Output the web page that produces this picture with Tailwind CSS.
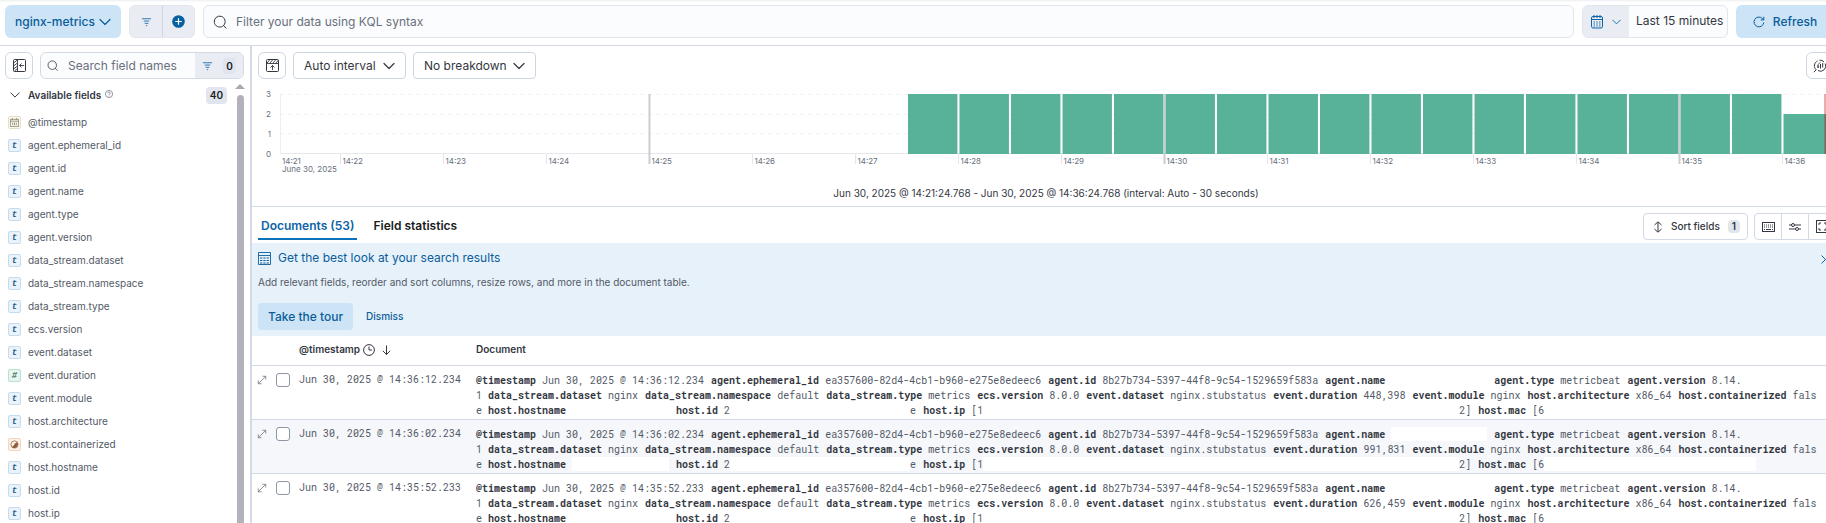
<!DOCTYPE html>
<html lang="en">
<head>
<meta charset="utf-8">
<title>Discover - nginx-metrics</title>
<script src="https://cdn.jsdelivr.net/npm/@tailwindcss/browser@4"></script>
</head>
<body class="overflow-hidden bg-white font-['Inter',sans-serif] text-xs text-[#343741]">
<svg class="hidden" aria-hidden="true">
  <symbol id="down" viewBox="0 0 12 8"><path d="M1 1.5 6 6.5 11 1.5" fill="none" stroke="currentColor" stroke-width="1.200" stroke-linecap="round" stroke-linejoin="round"/></symbol>
  <symbol id="filter" viewBox="0 0 12 12"><path d="M1 3h10M3 5.500h6M4 8h4M5.300 10.500h1.400" fill="none" stroke="currentColor" stroke-width=".9"/></symbol>
  <symbol id="search" viewBox="0 0 14 14"><path d="M9.500 11.400a5.500 5.500 0 1 1 1.600-1.400M10.300 10.300 13 13.200" fill="none" stroke="currentColor" stroke-linecap="round"/></symbol>
  <symbol id="expand" viewBox="0 0 12 12"><path d="M1.500 10.500 10.500 1.500M6.500 1.500h4v4M1.500 6.500v4h4" fill="none" stroke="currentColor" stroke-width=".9"/></symbol>
  <symbol id="datefield" viewBox="0 0 10 10"><path d="M.5 1.500h9v8h-9zM.5 3.500h9M3 5v3M5 5v3M7 5v3M2.500 0v1.500M7.500 0v1.500" fill="none" stroke="currentColor" stroke-width=".7"/></symbol>
  <symbol id="boolfield" viewBox="0 0 10 10"><circle cx="5" cy="5" r="4" fill="none" stroke="currentColor" stroke-width=".8"/><path d="M7.800 2.200A4 4 0 0 1 2.200 7.800L5 5.300V3.500h1.500z" fill="currentColor"/></symbol>
</svg>

<div class="flex h-screen w-[calc(100%+16px)] flex-col">
  <header class="flex h-[46px] shrink-0 items-start gap-2 border-b border-[#d3dae6] bg-linear-to-b from-[#eeeff1] from-0% to-white to-5% pt-[5px] pr-2 pl-[5px]">
    <button class="flex h-[33px] w-[116px] items-center justify-between rounded-md bg-[#cce4f5] px-[10px] text-xs font-medium text-[#0b5d9b]">nginx-metrics<svg class="h-2 w-3"><use href="#down"/></svg></button>
    <div class="flex h-[33px] overflow-hidden rounded-md border border-[#e3e6ef] bg-[#e9edf3] text-[#0b64a5]">
      <button class="flex w-8 items-center justify-center" aria-label="Saved queries"><svg class="size-[11px]"><use href="#filter"/></svg></button>
      <button class="flex w-8 items-center justify-center border-l border-[#cfd7e6]" aria-label="Add filter"><svg class="size-[13px]" viewBox="0 0 14 14"><circle cx="7" cy="7" r="6.800" fill="#07609f"/><path d="M7 3.500v7M3.500 7h7" stroke="#fff" stroke-width="1.300"/></svg></button>
    </div>
    <label class="flex h-[33px] flex-1 items-center gap-[9px] rounded-md border border-[#e0e5ee] bg-[#fbfcfd] pl-[9px]">
      <svg class="size-[14px]"><use href="#search"/></svg>
      <input class="flex-1 bg-transparent text-xs outline-none placeholder:text-[#69707d]" aria-label="Query" placeholder="Filter your data using KQL syntax">
    </label>
    <div class="flex h-[33px] w-[146px] overflow-hidden rounded-md border border-[#e0e5ee] bg-[#fbfcfd]">
      <button class="flex w-[46px] items-center justify-center gap-[9px] bg-[#e9edf3] text-[#0b64a5]" aria-label="Date quick select">
        <svg class="h-[14px] w-3" viewBox="0 0 12 14" fill="none" stroke="currentColor"><rect x=".5" y="1.500" width="11" height="11.500" rx="1.500"/><path d="M.5 4.500h11M3 0v3M6 0v3M9 0v3"/><path d="M2.500 7h7M2.500 9h7M2.500 11h7" stroke-dasharray="1.400 1.400"/></svg>
        <svg class="h-[6px] w-[9px]"><use href="#down"/></svg>
      </button>
      <button class="flex-1 pb-[2px] pl-[7px] text-left text-xs">Last 15 minutes</button>
    </div>
    <button class="flex h-[33px] w-[98px] items-center justify-center gap-2 rounded-md bg-[#cce4f5] text-xs font-medium text-[#0b5d9b]"><svg class="size-3" viewBox="0 0 12 12" fill="none" stroke="currentColor"><path d="M10.800 6.500a4.900 4.900 0 1 1-1.600-4.200l1.300 1.300M10.800.8v3.100H7.700"/></svg>Refresh</button>
  </header>

  <div class="flex min-h-0 flex-1">
    <aside class="relative flex w-[252px] shrink-0 flex-col overflow-hidden border-r-2 border-[#d3dae6] pt-[6px]">
      <div class="flex gap-[7px] pl-[5px]">
        <button class="flex h-[27px] w-7 items-center justify-center rounded-md border border-[#cfd6e3]" aria-label="Hide sidebar"><svg class="size-[13px]" viewBox="0 0 13 13" fill="none" stroke="currentColor"><rect x=".5" y=".5" width="12" height="12" rx="1"/><path d="M4.500.5v12M11 6.500H6.500M8.500 4.500l-2 2 2 2M.5 4l4-3M.5 7l4-3M.5 10l4-3M1.500 12l3-2.500" stroke-width=".9"/></svg></button>
        <div class="flex h-[27px] w-[204px] overflow-hidden rounded-md border border-[#d3dae6] bg-[#fbfcfd]">
          <label class="flex flex-1 items-center gap-[10px] pl-[6px]"><svg class="size-[11px]"><use href="#search"/></svg><input class="w-[120px] bg-transparent text-xs outline-none placeholder:text-[#69707d]" aria-label="Search field names" placeholder="Search field names"></label>
          <button class="flex w-12 items-center justify-center gap-[10px] bg-[#e9edf3] text-[10px] font-semibold" aria-label="Filter by field type"><svg class="size-[11px] text-[#0b64a5]"><use href="#filter"/></svg><span class="rounded-sm bg-[#e0e5ee] px-[3px] leading-4 text-[#1a1c21]">0</span></button>
        </div>
      </div>
      <div class="mt-2 flex h-[17px] items-center pl-[10px] text-[10px]">
        <button class="flex items-center font-semibold"><svg class="mr-2 h-2 w-[10px]"><use href="#down"/></svg>Available fields</button>
        <svg class="mb-[3px] ml-1 size-2" viewBox="0 0 10 10" fill="none" stroke="#69707d" stroke-width=".9"><circle cx="5" cy="5" r="4.500"/><path d="M3.500 4C3.500 2 6.500 2 6.500 4 6.500 5 5 5 5 6.200M5 7v1"/></svg>
        <span class="mr-[23px] ml-auto rounded-sm bg-[#e0e5ee] px-1 leading-[17px] font-semibold text-[#1a1c21]">40</span>
      </div>
      <ul id="fields" class="mt-[7px] pl-2 text-[10px] text-[#535966]"></ul>
      <div class="absolute top-[37px] right-[5px] bottom-0 flex w-[10px] flex-col items-center gap-[6px]" aria-hidden="true">
        <svg class="mt-[1px] h-[5px] w-[10px] shrink-0" viewBox="0 0 10 5"><path d="M5 0 10 5H0z" fill="#a8a8ad"/></svg>
        <div class="w-[7px] flex-1 rounded-t-full bg-[#b3b2ba]"></div>
      </div>
    </aside>

    <main class="flex min-w-0 flex-1 flex-col">
      <section class="flex h-[161px] shrink-0 flex-col border-b border-[#d3dae6] pt-[6px] pr-2 pl-[6px]">
        <div class="flex gap-[7px]">
          <button class="flex h-[27px] w-7 items-center justify-center rounded-md border border-[#cfd6e3]" aria-label="Hide chart"><svg class="size-[13px]" viewBox="0 0 13 13" fill="none" stroke="currentColor"><rect x=".5" y=".5" width="12" height="12" rx="1"/><path d="M.5 4.500h12M6.500 11V6.500M4.500 8.500l2-2 2 2M1 4l3-3.500M4 4l3-3.500M7 4l3-3.500M10 4l2.500-3" stroke-width=".9"/></svg></button>
          <button class="flex h-[27px] w-[113px] items-center justify-between rounded-sm border border-[#cfd6e3] px-[10px] text-xs">Auto interval<svg class="h-2 w-3"><use href="#down"/></svg></button>
          <button class="flex h-[27px] w-[123px] items-center justify-between rounded-sm border border-[#cfd6e3] px-[10px] text-xs">No breakdown<svg class="h-2 w-3"><use href="#down"/></svg></button>
          <button class="ml-auto flex h-[27px] w-7 items-center justify-center rounded-md border border-[#cfd6e3]" aria-label="Edit visualization"><svg class="size-[14px]" viewBox="0 0 14 14" fill="none" stroke="currentColor"><path d="M3.200 10.800A5.300 5.300 0 0 1 4.500 2M6.500 1.200a5.300 5.300 0 0 1 4.500 1.700M12.200 4.500A5.300 5.300 0 0 1 5 11.600M3.300 10.700.8 13.200M5.300 9V6.500M7.500 9.500V5M9.700 8.500V4"/><path d="M4.500 8.500c0-3 1.500-4.500 3-5" stroke-width=".8"/></svg></button>
        </div>
        <div class="mt-[9px] flex">
          <div class="flex h-[87px] w-[22px] flex-col gap-[8px] pr-[9px] text-right text-[8px] leading-3 text-[#69707d]"><span>3</span><span>2</span><span>1</span><span>0</span></div>
          <svg id="chart" class="mt-[6px] h-[80px] min-w-0 flex-1 overflow-visible" role="img" aria-label="Histogram of documents over time"></svg>
        </div>
        <p class="mt-[11px] text-center text-[10px] leading-[14px]">Jun 30, 2025 @ 14:21:24.768 - Jun 30, 2025 @ 14:36:24.768 (interval: Auto - 30 seconds)</p>
      </section>

      <div class="flex h-9 shrink-0 items-start pt-[6px] pr-[5px] pl-[6px]">
        <nav class="flex gap-3 text-xs font-semibold" role="tablist">
          <button role="tab" aria-selected="true" class="h-[27px] border-b-2 border-[#0b71b8] px-[3px] text-[#0b64a5]">Documents (53)</button>
          <button role="tab" aria-selected="false" class="h-[27px] border-b-2 border-transparent px-1 text-[#1a1c21]">Field statistics</button>
        </nav>
        <button class="ml-auto flex h-[27px] w-[105px] items-center justify-between rounded-sm border border-[#d3dae6] pr-[7px] pl-[9px] text-[10px] font-medium"><svg class="h-3 w-[10px]" viewBox="0 0 10 12" fill="none" stroke="currentColor"><path d="M5 1v10M1.500 4 5 .8 8.500 4M1.500 8 5 11.200 8.500 8"/></svg>Sort fields<span class="rounded-sm bg-[#e0e5ee] px-1 leading-[13px] font-semibold">1</span></button>
        <div class="ml-[6px] flex h-[27px] divide-x divide-[#d3dae6] rounded-sm border border-[#d3dae6]">
          <button class="flex w-[27px] items-center justify-center" aria-label="Keyboard shortcuts"><svg class="h-[10px] w-[13px]" viewBox="0 0 13 10" fill="none" stroke="currentColor"><rect x=".5" y=".5" width="12" height="9"/><path d="M2 3h9M2 5h9" stroke-dasharray="1 1"/><path d="M2 7.500h1M4 7.500h5M10 7.500h1"/></svg></button>
          <button class="flex w-[27px] items-center justify-center" aria-label="Display options"><svg class="h-[10px] w-3" viewBox="0 0 12 10" fill="none" stroke="currentColor"><path d="M0 3h2.500M5.500 3H12M0 7h6.500M9.500 7H12"/><circle cx="4" cy="3" r="1.500"/><circle cx="8" cy="7" r="1.500"/></svg></button>
          <button class="flex w-[27px] items-center justify-center" aria-label="Full screen"><svg class="size-[13px]" viewBox="0 0 13 13" fill="none" stroke="currentColor"><rect x=".5" y=".5" width="12" height="12"/><path d="M3 5V3h2M8 3h2v2M10 8v2H8M5 10H3V8"/></svg></button>
        </div>
      </div>

      <section class="relative h-[93px] shrink-0 bg-[#e6f1fa] pt-[6px] pl-[6px]">
        <h2 class="flex items-center gap-[7px] text-xs leading-[18px] text-[#0b5d9b]"><svg class="size-[13px]" viewBox="0 0 13 13" fill="none" stroke="currentColor"><path d="M.5.5h12v12H.5zM.5 3.500h12" stroke-width=".9"/><path d="M2 6h9M2 8.500h9M2 11h9" stroke-dasharray="2.300 1"/></svg>Get the best look at your search results</h2>
        <p class="mt-2 text-[10px] leading-[15px] text-[#535966]">Add relevant fields, reorder and sort columns, resize rows, and more in the document table.</p>
        <div class="mt-[13px] flex items-center gap-[13px] text-[#0b5d9b]">
          <button class="h-[27px] rounded-sm bg-[#cce4f5] px-[10px] text-xs font-medium">Take the tour</button>
          <button class="text-[10px] font-medium">Dismiss</button>
        </div>
        <button class="absolute top-3 right-3 text-[#0b64a5]" aria-label="Close"><svg class="size-[9px]" viewBox="0 0 9 9"><path d="m.5.5 8 8M8.500.5l-8 8" stroke="currentColor"/></svg></button>
      </section>

      <table class="w-full table-fixed border-collapse text-[10px]">
        <colgroup><col class="w-10"><col class="w-[176px]"><col></colgroup>
        <thead><tr class="h-[29px] border-b border-[#d3dae6] text-left">
          <th aria-label="Controls"></th>
          <th class="pl-[7px] font-semibold"><span class="flex items-center pb-px">@timestamp<svg class="ml-[3px] size-3" viewBox="0 0 12 12" fill="none" stroke="currentColor"><circle cx="6" cy="6" r="5.400"/><path d="M6 2.500V6h3"/></svg><svg class="ml-[7px] h-[10px] w-[9px]" viewBox="0 0 9 10" fill="none" stroke="currentColor"><path d="M4.500.5v9M.8 5.800l3.700 3.700 3.700-3.700"/></svg></span></th>
          <th class="pb-px pl-2 font-semibold">Document</th>
        </tr></thead>
        <tbody id="docs" class="font-['Roboto_Mono','Liberation_Mono',monospace]"></tbody>
      </table>
    </main>
  </div>
</div>

<script>
const fields = ['@timestamp','agent.ephemeral_id','agent.id','agent.name','agent.type','agent.version','data_stream.dataset','data_stream.namespace','data_stream.type','ecs.version','event.dataset','event.duration','event.module','host.architecture','host.containerized','host.hostname','host.id','host.ip'];
const types = {
  '@timestamp': ['border-[#e4dfc8] bg-[#fbf9f0] text-[#6b6348]', '<svg class="size-[9px]"><use href="#datefield"/></svg>'],
  'event.duration': ['border-[#b9dfd0] bg-[#e8f6f0] text-[#2b6b54]', '#'],
  'host.containerized': ['border-[#f3d5c0] bg-[#fdf0e6] text-[#8a5a3c]', '<svg class="size-[9px]"><use href="#boolfield"/></svg>']
};
document.getElementById('fields').innerHTML = fields.map(f => {
  const [color, glyph] = types[f] || ['border-[#c5dcee] bg-[#eaf3fb] text-[#2d5f87]', 't'];
  return `<li class="flex h-[23px] items-center gap-[7px]"><span class="flex size-[13px] items-center justify-center rounded-[2px] border font-['Liberation_Mono',monospace] text-[9px] font-bold italic ${color}">${glyph}</span>${f}</li>`;
}).join('');

// Time axis: seconds since 14:21:00; the domain runs from the range start to the end of the last bucket.
const start = 24.768, end = 930;
const pct = s => ((s - start) / (end - start) * 100) + '%';
let g = '';
[0, 20, 39].forEach(y => g += `<line x1="0" x2="100%" y1="${y + .5}" y2="${y + .5}" stroke="#f1f2f5" stroke-dasharray="4 4"/>`);
g += '<line x1="0" x2="100%" y1="59.5" y2="59.5" stroke="#e6e8ec"/><line x1=".5" x2=".5" y1="0" y2="60" stroke="#eceef2"/>';
for (let s = 390; s < 930; s += 30) {
  const h = s === 900 ? 40 : 60;
  g += `<svg x="${pct(s)}" y="${60 - h}" width="${30 / (end - start) * 100}%" height="${h}"><rect x="1" width="96%" height="100%" fill="#57b299"/></svg>`;
}
for (let m = 1; m <= 15; m++) {
  const x = pct(m * 60), major = m === 4 || m === 9 || m === 14;
  g += `<line x1="${x}" x2="${x}" y1="${major ? 0 : 60}" y2="70" stroke="${major ? '#b9bcc2' : '#e3e6eb'}" stroke-opacity="${major ? .75 : 1}" stroke-width="${major ? 2 : 1}"/>`;
  g += `<svg x="${x}" y="60" overflow="visible"><text x="2" y="10" font-size="8" fill="#69707d">14:${21 + m}</text></svg>`;
}
g += '<text x="2" y="70" font-size="8" fill="#69707d">14:21</text><text x="2" y="78" font-size="8" fill="#69707d">June 30, 2025</text>';
g += `<line x1="${pct(924.768)}" x2="${pct(924.768)}" y1="0" y2="60" stroke="#bd271e" stroke-opacity=".75"/><rect x="${pct(925)}" y="20" width="9" height="40" fill="#343741" fill-opacity=".3"/>`;
document.getElementById('chart').innerHTML = g;

// Documents: each line is a list of [field, value] pairs; hidden values are blank blocks.
const blank = w => `<span class="inline-block h-[14px] bg-white align-top ${w}"></span>`;
const pair = (k, v) => `<b class="text-[#343741]">${k}</b> <span class="mr-px">${v}</span> `;
const docs = [['14:36:12.234', '448,398'], ['14:36:02.234', '991,831'], ['14:35:52.233', '626,459']];
document.getElementById('docs').innerHTML = docs.map(([t, d], i) => `
<tr class="h-[54px] border-b border-[#d3dae6] align-top ${i % 2 ? 'bg-[#f5f7fa]' : ''}">
  <td class="pt-[7px] pl-[5px]"><div class="flex items-center gap-[9px]"><button aria-label="Open document"><svg class="block size-[10px] text-[#69707d]"><use href="#expand"/></svg></button><input type="checkbox" aria-label="Select document" class="size-[14px] appearance-none rounded-[3px] border border-[#8f96a3] bg-white"></div></td>
  <td class="pt-[6px] pl-[7px] leading-[15px] whitespace-nowrap text-[#535966]">Jun 30, 2025 @ ${t}</td>
  <td class="overflow-hidden pt-[7px] pl-2 leading-[15px] whitespace-nowrap text-[#535966]">
    <div class="h-[15px]">${pair('@timestamp', 'Jun 30, 2025 @ ' + t)}${pair('agent.ephemeral_id', 'ea357600-82d4-4cb1-b960-e275e8edeec6')}${pair('agent.id', '8b27b734-5397-44f8-9c54-1529659f583a')}${pair('agent.name', blank('w-[96px]'))}${pair('agent.type', 'metricbeat')}${pair('agent.version', '8.14.')}</div>
    <div class="h-[15px]">1 ${pair('data_stream.dataset', 'nginx')}${pair('data_stream.namespace', 'default')}${pair('data_stream.type', 'metrics')}${pair('ecs.version', '8.0.0')}${pair('event.dataset', 'nginx.stubstatus')}${pair('event.duration', d)}${pair('event.module', 'nginx')}${pair('host.architecture', 'x86_64')}${pair('host.containerized', 'fals')}</div>
    <div class="h-[15px]">e ${pair('host.hostname', blank('w-[97px]'))}${pair('host.id', '2' + blank('w-[180px]') + 'e')}${pair('host.ip', '[1' + blank('w-[476px]') + '2]')}${pair('host.mac', '[6' + blank('w-[212px]'))}</div>
  </td>
</tr>`).join('');
</script>
</body>
</html>
